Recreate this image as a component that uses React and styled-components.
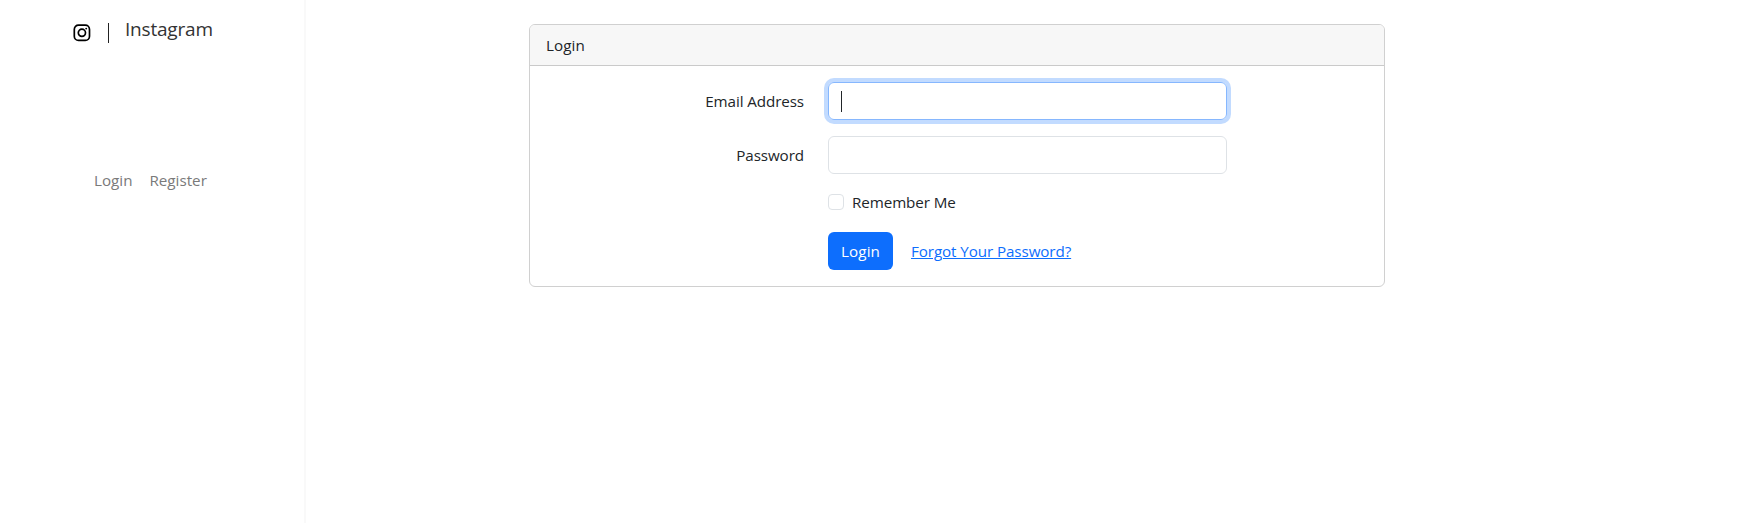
import React from "react";
import styled, { createGlobalStyle } from "styled-components";

const GlobalStyle = createGlobalStyle`
  *, *::before, *::after { box-sizing: border-box; }
  body {
    margin: 0;
    background: #fff;
    color: #212529;
    font-family: "Open Sans", "Noto Sans", sans-serif;
    font-size: 15.2px;
    letter-spacing: -0.09px;
    line-height: 24px;
  }
`;

const Page = styled.div`
  display: flex;
  height: 100vh;
  overflow: hidden;
`;

const Sidebar = styled.aside`
  width: 306px;
  flex: none;
  border-right: 2px solid #f9f9f9;
`;

const Brand = styled.a`
  display: flex;
  align-items: flex-start;
  height: 60px;
  padding: 14px 0 0 73px;
  color: #262626;
`;

const Logo = styled.svg`
  display: block;
  width: 18px;
  height: 18px;
  margin-top: 10px;
`;

const Divider = styled.span`
  width: 1px;
  height: 20px;
  margin: 9px 16px 0 17px;
  background: #222;
`;

const BrandName = styled.span`
  font-size: 19px;
  letter-spacing: -0.2px;
  line-height: 30px;
  color: #333;
`;

const Nav = styled.nav`
  display: flex;
  gap: 17px;
  padding: 108px 0 0 94px;
`;

const NavLink = styled.a`
  letter-spacing: 0;
  color: #7a7a7a;
`;

const Main = styled.main`
  flex: 1;
  padding: 24px 0 0 223px;
`;

const Card = styled.section`
  width: 856px;
  border: 1px solid #d0d0d0;
  border-radius: 6px;
  overflow: hidden;
`;

const CardHeader = styled.header`
  padding: 8px 16px;
  background: #f7f7f7;
  border-bottom: 1px solid #cacaca;
  letter-spacing: 0.1px;
`;

const Form = styled.div`
  display: flex;
  flex-direction: column;
  gap: 16px;
  padding: 16px;
`;

const Row = styled.div`
  display: grid;
  grid-template-columns: 258px 399px;
  column-gap: 24px;
  align-items: center;
`;

const Label = styled.label`
  text-align: right;
`;

const Field = styled.div`
  display: flex;
  align-items: center;
  height: 38px;
  padding: 0 12px;
  border: 1px solid ${(p) => (p.$focused ? "#86b7fe" : "#dee2e6")};
  border-radius: 6px;
  box-shadow: ${(p) => (p.$focused ? "0 0 0 4px #c2dbff" : "none")};
`;

const Caret = styled.span`
  width: 1px;
  height: 21px;
  background: #212529;
`;

const Check = styled.div`
  grid-column: 2;
  display: flex;
  align-items: center;
  gap: 8px;
  height: 26px;
  padding-bottom: 2px;
`;

const Box = styled.span`
  width: 16px;
  height: 16px;
  border: 1px solid #dee2e6;
  border-radius: 4px;
`;

const Actions = styled.div`
  grid-column: 2;
  display: flex;
  align-items: center;
  gap: 18px;
`;

const Button = styled.button`
  width: 65px;
  height: 38px;
  padding: 0;
  border: 0;
  border-radius: 6px;
  background: #0d6efd;
  color: #fff;
  font: inherit;
  letter-spacing: 0.1px;
`;

const ForgotLink = styled.a`
  color: #0d6efd;
  text-decoration: underline;
`;

export default function App() {
  return (
    <Page>
      <GlobalStyle />
      <Sidebar>
        <Brand>
          <Logo viewBox="0 0 18 18" fill="none" stroke="#000">
            <rect x="1.3" y="1.2" width="15.2" height="15.2" rx="4.2" strokeWidth="1.7" />
            <circle cx="8.9" cy="8.8" r="3.6" strokeWidth="1.7" />
            <circle cx="13.2" cy="4.6" r="0.95" fill="#000" stroke="none" />
          </Logo>
          <Divider />
          <BrandName>Instagram</BrandName>
        </Brand>
        <Nav>
          <NavLink>Login</NavLink>
          <NavLink>Register</NavLink>
        </Nav>
      </Sidebar>
      <Main>
        <Card>
          <CardHeader>Login</CardHeader>
          <Form>
            <Row>
              <Label>Email Address</Label>
              <Field $focused>
                <Caret />
              </Field>
            </Row>
            <Row>
              <Label>Password</Label>
              <Field />
            </Row>
            <Row>
              <Check>
                <Box />
                <span>Remember Me</span>
              </Check>
            </Row>
            <Row>
              <Actions>
                <Button>Login</Button>
                <ForgotLink>Forgot Your Password?</ForgotLink>
              </Actions>
            </Row>
          </Form>
        </Card>
      </Main>
    </Page>
  );
}
